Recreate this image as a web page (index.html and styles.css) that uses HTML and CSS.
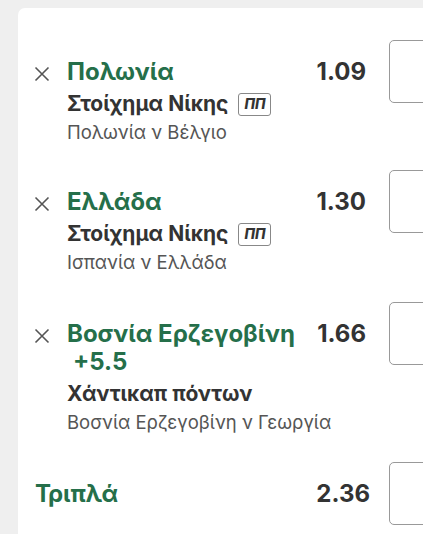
FILE: index.html
```html
<!DOCTYPE html>
<html lang="el">
<head>
<meta charset="utf-8">
<link rel="stylesheet" href="styles.css">
</head>
<body>
<div class="card">
  <div class="bet">
    <svg class="close" viewBox="0 0 16 16"><path d="M1.5 1.5 L14.5 14.5 M14.5 1.5 L1.5 14.5"/></svg>
    <div class="info">
      <div class="title">Πολωνία</div>
      <div class="market">Στοίχημα Νίκης <span class="badge">ΠΠ</span></div>
      <div class="event">Πολωνία ν Βέλγιο</div>
    </div>
    <div class="odds">1.09</div>
    <div class="stake"></div>
  </div>
  <div class="bet second">
    <svg class="close" viewBox="0 0 16 16"><path d="M1.5 1.5 L14.5 14.5 M14.5 1.5 L1.5 14.5"/></svg>
    <div class="info">
      <div class="title">Ελλάδα</div>
      <div class="market">Στοίχημα Νίκης <span class="badge">ΠΠ</span></div>
      <div class="event">Ισπανία ν Ελλάδα</div>
    </div>
    <div class="odds">1.30</div>
    <div class="stake"></div>
  </div>
  <div class="bet tall">
    <svg class="close" viewBox="0 0 16 16"><path d="M1.5 1.5 L14.5 14.5 M14.5 1.5 L1.5 14.5"/></svg>
    <div class="info">
      <div class="title">Βοσνία Ερζεγοβίνη<br><span class="line">+5.5</span></div>
      <div class="market">Χάντικαπ πόντων</div>
      <div class="event">Βοσνία Ερζεγοβίνη ν Γεωργία</div>
    </div>
    <div class="odds">1.66</div>
    <div class="stake"></div>
  </div>
  <div class="bet total">
    <div class="info">
      <div class="title">Τριπλά</div>
    </div>
    <div class="odds">2.36</div>
    <div class="stake"></div>
  </div>
</div>
</body>
</html>
```
FILE: styles.css
```css
html, body {
  margin: 0;
  padding: 0;
}
body {
  background: #efefef;
  width: 423px;
  height: 534px;
  overflow: hidden;
  font-family: Inter, "Noto Sans", sans-serif;
  color: #333;
}
.card {
  margin: 8px 0 0 18px;
  width: 460px;
  height: 526px;
  overflow: hidden;
  background: #fff;
  border-radius: 7px 0 0 0;
  padding-top: 32px;
  box-sizing: border-box;
}
.bet {
  display: flex;
  align-items: flex-start;
  padding: 0 0 0 16px;
  min-height: 130px;
  box-sizing: border-box;
}
.second {
  min-height: 132px;
}
.close {
  width: 16px;
  height: 16px;
  margin-top: 26px;
  flex: none;
  stroke: #555;
  stroke-width: 1.6;
  fill: none;
}
.info {
  flex: 1;
  min-width: 0;
  margin-left: 17px;
  margin-top: 18px;
  padding-bottom: 24px;
}
.tall .info {
  padding-bottom: 26px;
}
.title {
  font-weight: 700;
  font-size: 24px;
  line-height: 28px;
  color: #256f4a;
}
.line {
  padding-left: 6px;
}
.market {
  margin-top: 4px;
  font-weight: 700;
  font-size: 21px;
  line-height: 28px;
  display: flex;
  align-items: center;
  gap: 10px;
}
.badge {
  display: inline-flex;
  align-items: center;
  justify-content: center;
  width: 33px;
  height: 23px;
  box-sizing: border-box;
  border: 1.5px solid #888;
  border-radius: 3px;
  font-size: 14px;
  font-style: italic;
  font-weight: 800;
  color: #333;
}
.event {
  font-size: 18.5px;
  line-height: 28px;
  color: #555;
  white-space: nowrap;
}
.odds {
  margin-top: 18px;
  font-weight: 700;
  font-size: 24px;
  line-height: 28px;
  color: #333;
  margin-left: 8px;
}
.stake {
  flex: none;
  width: 89px;
  height: 63px;
  margin-left: 23px;
  box-sizing: border-box;
  border: 1.5px solid #999;
  border-radius: 5px;
}
.total {
  padding-left: 17px;
  min-height: 0;
}
.total .info {
  margin-left: 0;
  margin-top: 18px;
  padding-bottom: 0;
}
.total .odds {
  margin-top: 18px;
}
.total .stake {
  margin-left: 19px;
}
```
